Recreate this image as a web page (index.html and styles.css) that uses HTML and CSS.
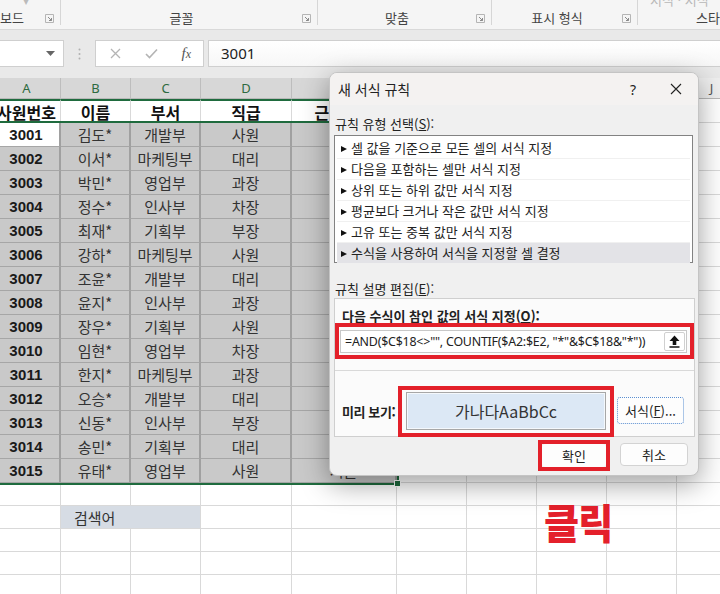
FILE: index.html
```html
<!DOCTYPE html>
<html lang="ko">
<head>
  <meta charset="UTF-8" />
  <title>새 서식 규칙</title>
  <link rel="stylesheet" href="styles.css">
</head>
<body>

  <div class="ribbon">
    <div class="group g1">
      <div class="gtop"><span class="caret">▾</span></div>
      <div class="glabel"><span class="gname left">보드</span><span class="launch"><svg width="9" height="9" viewBox="0 0 9 9"><path d="M0.5 0.5h8v8h-8z" stroke="#b5b5b5" fill="none"/><path d="M3 3l3.5 3.5M6.5 4v2.5H4" stroke="#8a8a8a" fill="none"/></svg></span></div>
    </div>
    <div class="group g2">
      <div class="gtop"></div>
      <div class="glabel"><span class="gname">글꼴</span><span class="launch"><svg width="9" height="9" viewBox="0 0 9 9"><path d="M0.5 0.5h8v8h-8z" stroke="#b5b5b5" fill="none"/><path d="M3 3l3.5 3.5M6.5 4v2.5H4" stroke="#8a8a8a" fill="none"/></svg></span></div>
    </div>
    <div class="group g3">
      <div class="gtop"></div>
      <div class="glabel"><span class="gname">맞춤</span><span class="launch"><svg width="9" height="9" viewBox="0 0 9 9"><path d="M0.5 0.5h8v8h-8z" stroke="#b5b5b5" fill="none"/><path d="M3 3l3.5 3.5M6.5 4v2.5H4" stroke="#8a8a8a" fill="none"/></svg></span></div>
    </div>
    <div class="group g4">
      <div class="gtop"></div>
      <div class="glabel"><span class="gname">표시 형식</span><span class="launch"><svg width="9" height="9" viewBox="0 0 9 9"><path d="M0.5 0.5h8v8h-8z" stroke="#b5b5b5" fill="none"/><path d="M3 3l3.5 3.5M6.5 4v2.5H4" stroke="#8a8a8a" fill="none"/></svg></span></div>
    </div>
    <div class="group g5">
      <div class="gtop"><span class="faint">서식 · 서식</span></div>
      <div class="glabel"><span class="gname">스타일</span><span class="launch"></span></div>
    </div>
  </div>

  <div class="band"></div>

  <div class="fbar">
    <div class="namebox">
      <svg width="9" height="5" viewBox="0 0 9 5"><path d="M0 0h9L4.5 5z" fill="#666"/></svg>
    </div>
    <div class="fdots">
      <svg width="3" height="12" viewBox="0 0 3 12"><circle cx="1.5" cy="1.5" r="1" fill="#b0b0b0"/><circle cx="1.5" cy="6" r="1" fill="#b0b0b0"/><circle cx="1.5" cy="10.5" r="1" fill="#b0b0b0"/></svg>
    </div>
    <div class="fbtns">
      <svg width="11" height="11" viewBox="0 0 11 11"><path d="M1 1l9 9M10 1l-9 9" stroke="#b4b4b4" stroke-width="1.3"/></svg>
      <svg width="13" height="11" viewBox="0 0 13 11"><path d="M1 6l3.5 3.5L12 1.5" stroke="#b4b4b4" stroke-width="1.6" fill="none"/></svg>
      <span class="fx"><i>f</i><i class="fxx">x</i></span>
    </div>
    <div class="finput">3001</div>
  </div>

  <div class="band2"></div>

  <div class="sheet">
    <div class="row colhead">
      <div class="c h hs">A</div><div class="c h hs">B</div><div class="c h hs">C</div><div class="c h hs">D</div><div class="c h hs">E</div>
      <div class="c h">F</div><div class="c h">G</div><div class="c h">H</div><div class="c h">I</div><div class="c h">J</div>
    </div>
    <div class="row r1">
      <div class="c t">사원번호</div><div class="c t">이름</div><div class="c t">부서</div><div class="c t">직급</div><div class="c t">근속연수</div>
      <div class="c"></div><div class="c"></div><div class="c"></div><div class="c"></div><div class="c"></div>
    </div>
    <div class="row"><div class="c s a act">3001</div><div class="c s">김도*</div><div class="c s">개발부</div><div class="c s">사원</div><div class="c s">서울</div><div class="c"></div><div class="c"></div><div class="c"></div><div class="c"></div><div class="c"></div></div>
    <div class="row"><div class="c s a">3002</div><div class="c s">이서*</div><div class="c s">마케팅부</div><div class="c s">대리</div><div class="c s">서울</div><div class="c"></div><div class="c"></div><div class="c"></div><div class="c"></div><div class="c"></div></div>
    <div class="row"><div class="c s a">3003</div><div class="c s">박민*</div><div class="c s">영업부</div><div class="c s">과장</div><div class="c s">부산</div><div class="c"></div><div class="c"></div><div class="c"></div><div class="c"></div><div class="c"></div></div>
    <div class="row"><div class="c s a">3004</div><div class="c s">정수*</div><div class="c s">인사부</div><div class="c s">차장</div><div class="c s">대구</div><div class="c"></div><div class="c"></div><div class="c"></div><div class="c"></div><div class="c"></div></div>
    <div class="row"><div class="c s a">3005</div><div class="c s">최재*</div><div class="c s">기획부</div><div class="c s">부장</div><div class="c s">서울</div><div class="c"></div><div class="c"></div><div class="c"></div><div class="c"></div><div class="c"></div></div>
    <div class="row"><div class="c s a">3006</div><div class="c s">강하*</div><div class="c s">마케팅부</div><div class="c s">사원</div><div class="c s">인천</div><div class="c"></div><div class="c"></div><div class="c"></div><div class="c"></div><div class="c"></div></div>
    <div class="row"><div class="c s a">3007</div><div class="c s">조윤*</div><div class="c s">개발부</div><div class="c s">대리</div><div class="c s">서울</div><div class="c"></div><div class="c"></div><div class="c"></div><div class="c"></div><div class="c"></div></div>
    <div class="row"><div class="c s a">3008</div><div class="c s">윤지*</div><div class="c s">인사부</div><div class="c s">과장</div><div class="c s">광주</div><div class="c"></div><div class="c"></div><div class="c"></div><div class="c"></div><div class="c"></div></div>
    <div class="row"><div class="c s a">3009</div><div class="c s">장우*</div><div class="c s">기획부</div><div class="c s">사원</div><div class="c s">대전</div><div class="c"></div><div class="c"></div><div class="c"></div><div class="c"></div><div class="c"></div></div>
    <div class="row"><div class="c s a">3010</div><div class="c s">임현*</div><div class="c s">영업부</div><div class="c s">차장</div><div class="c s">서울</div><div class="c"></div><div class="c"></div><div class="c"></div><div class="c"></div><div class="c"></div></div>
    <div class="row"><div class="c s a">3011</div><div class="c s">한지*</div><div class="c s">마케팅부</div><div class="c s">과장</div><div class="c s">부산</div><div class="c"></div><div class="c"></div><div class="c"></div><div class="c"></div><div class="c"></div></div>
    <div class="row"><div class="c s a">3012</div><div class="c s">오승*</div><div class="c s">개발부</div><div class="c s">대리</div><div class="c s">울산</div><div class="c"></div><div class="c"></div><div class="c"></div><div class="c"></div><div class="c"></div></div>
    <div class="row"><div class="c s a">3013</div><div class="c s">신동*</div><div class="c s">인사부</div><div class="c s">부장</div><div class="c s">서울</div><div class="c"></div><div class="c"></div><div class="c"></div><div class="c"></div><div class="c"></div></div>
    <div class="row"><div class="c s a">3014</div><div class="c s">송민*</div><div class="c s">기획부</div><div class="c s">대리</div><div class="c s">수원</div><div class="c"></div><div class="c"></div><div class="c"></div><div class="c"></div><div class="c"></div></div>
    <div class="row"><div class="c s a">3015</div><div class="c s">유태*</div><div class="c s">영업부</div><div class="c s">사원</div><div class="c s">서울</div><div class="c"></div><div class="c"></div><div class="c"></div><div class="c"></div><div class="c"></div></div>
    <div class="row low"><div class="c"></div><div class="c"></div><div class="c"></div><div class="c"></div><div class="c"></div><div class="c"></div><div class="c"></div><div class="c"></div><div class="c"></div><div class="c"></div></div>
    <div class="row low"><div class="c"></div><div class="c search">검색어</div><div class="c"></div><div class="c"></div><div class="c"></div><div class="c"></div><div class="c"></div><div class="c"></div><div class="c"></div></div>
    <div class="row low"><div class="c"></div><div class="c"></div><div class="c"></div><div class="c"></div><div class="c"></div><div class="c"></div><div class="c"></div><div class="c"></div><div class="c"></div><div class="c"></div></div>
    <div class="row low"><div class="c"></div><div class="c"></div><div class="c"></div><div class="c"></div><div class="c"></div><div class="c"></div><div class="c"></div><div class="c"></div><div class="c"></div><div class="c"></div></div>
    <div class="row low"><div class="c"></div><div class="c"></div><div class="c"></div><div class="c"></div><div class="c"></div><div class="c"></div><div class="c"></div><div class="c"></div><div class="c"></div><div class="c"></div></div>
  </div>

  <!-- 선택 영역 테두리 -->
  <div class="selection"></div>
  <div class="fill-handle"></div>

  <div class="note">클릭</div>

  <div class="dialog">
    <div class="dlg-title">
      <span class="dlg-name">새 서식 규칙</span>
      <span class="dlg-help">?</span>
      <span class="dlg-close"><svg width="12" height="12" viewBox="0 0 12 12"><path d="M1 1l10 10M11 1L1 11" stroke="#222" stroke-width="1.1"/></svg></span>
    </div>
    <div class="dlg-body">
      <div class="dlg-label">규칙 유형 선택(<u>S</u>):</div>
      <div class="rule-list">
        <div class="rule">셀 값을 기준으로 모든 셀의 서식 지정</div>
        <div class="rule">다음을 포함하는 셀만 서식 지정</div>
        <div class="rule">상위 또는 하위 값만 서식 지정</div>
        <div class="rule">평균보다 크거나 작은 값만 서식 지정</div>
        <div class="rule">고유 또는 중복 값만 서식 지정</div>
        <div class="rule active">수식을 사용하여 서식을 지정할 셀 결정</div>
      </div>
      <div class="dlg-label second">규칙 설명 편집(<u>E</u>):</div>
      <div class="edit-box">
        <div class="edit-top">
          <div class="bold-label">다음 수식이 참인 값의 서식 지정(<u>O</u>):</div>
          <div class="mark formula-mark">
            <div class="formula">
              <span class="formula-text">=AND($C$18&lt;&gt;"", COUNTIF($A2:$E2, "*"&amp;$C$18&amp;"*"))</span>
              <span class="collapse"><svg width="11" height="13" viewBox="0 0 11 13"><path d="M5.5 0.5L10.5 6H7.3v4H3.7V6H0.5z" fill="#111"/><path d="M0.5 12h10" stroke="#111" stroke-width="1.6"/></svg></span>
            </div>
          </div>
        </div>
        <div class="edit-bottom">
          <div class="bold-label preview-label">미리 보기:</div>
          <div class="mark preview-mark">
            <div class="preview">가나다AaBbCc</div>
          </div>
          <button class="btn format-btn">서식(<u>F</u>)...</button>
        </div>
      </div>
      <div class="dlg-foot">
        <div class="mark ok-mark"><button class="btn ok-btn">확인</button></div>
        <button class="btn cancel-btn">취소</button>
      </div>
    </div>
  </div>

</body>
</html>
```

FILE: styles.css
```css
* {
  box-sizing: border-box;
}

body {
  margin: 0;
  width: 720px;
  height: 594px;
  overflow: hidden;
  position: relative;
  background: #fff;
  font-family: "Noto Sans CJK KR", "Noto Sans", sans-serif;
  color: #333;
}

/* 리본 */
.ribbon {
  height: 30px;
  display: flex;
  background: #f5f5f5;
  border-bottom: 1px solid #d9d9d9;
  overflow: hidden;
}

.group {
  flex: 0 0 auto;
  height: 25px;
  display: flex;
  flex-direction: column;
  border-right: 1px solid #d6d6d6;
}

.g1 { width: 61px; }
.g2 { width: 257px; }
.g3 { width: 174px; }
.g4 { width: 146px; }
.g5 { width: 167px; border-right: none; }

.gtop {
  height: 11px;
  position: relative;
  overflow: hidden;
}

.caret {
  position: absolute;
  left: 23px;
  top: -9px;
  font-size: 12px;
  color: #bbb;
}

.faint {
  position: absolute;
  left: 12px;
  top: -10px;
  font-size: 13px;
  color: #b8b8b8;
}

.glabel {
  flex: 1;
  display: flex;
  align-items: center;
  font-size: 13px;
  color: #444;
}

.gname {
  flex: 1;
  text-align: center;
  line-height: 14px;
}

.gname.left {
  text-align: left;
}

.launch {
  width: 15px;
  display: flex;
  align-items: center;
}

.band {
  height: 10px;
  background: #e9e9e9;
}

/* 수식 입력줄 */
.fbar {
  height: 27px;
  display: flex;
  background: #e9e9e9;
}

.namebox {
  width: 64px;
  background: #fff;
  border: 1px solid #cfcfcf;
  border-left: none;
  display: flex;
  align-items: center;
  justify-content: flex-end;
  padding-right: 8px;
}

.fdots {
  width: 31px;
  display: flex;
  align-items: center;
  justify-content: center;
}

.fbtns {
  width: 109px;
  background: #fff;
  border: 1px solid #cfcfcf;
  display: flex;
  align-items: center;
  justify-content: space-between;
  padding: 0 12px 0 14px;
}

.fx {
  font-family: "Liberation Serif", serif;
  font-size: 15px;
  color: #555;
}

.fxx {
  font-size: 12px;
}

.finput {
  flex: 1;
  margin-left: 4px;
  background: linear-gradient(#fff, #f7f7f7);
  border: 1px solid #cfcfcf;
  border-right: none;
  font-family: "Noto Sans", sans-serif;
  font-size: 15px;
  color: #222;
  padding-left: 12px;
  line-height: 24px;
}

.band2 {
  height: 11px;
  background: #e9e9e9;
}

/* 시트 */
.sheet {
  margin-left: -7px;
}

.row {
  display: grid;
  grid-template-columns: 68px 70px 70px 91px 105px 70px 70px 70px 70px 70px;
  height: 24px;
}

.row.low {
  height: 23px;
}

.c {
  border-right: 1px solid #d9d9d9;
  border-bottom: 1px solid #d9d9d9;
  display: flex;
  align-items: center;
  justify-content: center;
  font-size: 15px;
  color: #333;
  white-space: nowrap;
  overflow: hidden;
}

.colhead {
  height: 21px;
  background: #efefef;
}

.c.h {
  font-family: "Noto Sans", sans-serif;
  font-size: 13px;
  color: #555;
  border-right-color: #cdcdcd;
  border-bottom-color: #b8b8b8;
}

.c.hs {
  background: #d7d7d7;
  color: #2d6a40;
  border-right-color: #bdbdbd;
}

.r1 .c.t {
  font-weight: bold;
  font-size: 16px;
  color: #111;
  border-top: 2px solid #1f6b3e;
}

.c.s {
  background: #c9c9c9;
  border-right: 2px solid #a0a0a0;
  border-bottom: 1px solid #a6a6a6;
}

.c.a {
  font-family: "Liberation Sans", Arial, sans-serif;
  font-weight: bold;
  color: #1a1a1a;
}

.c.act {
  background: #fff;
}

.c.search {
  grid-column: span 2;
  background: #d6dce4;
  justify-content: flex-start;
  padding-left: 13px;
}

.selection {
  position: absolute;
  left: -6px;
  top: 121px;
  width: 405px;
  height: 364px;
  border: 2px solid #1f6b3e;
  pointer-events: none;
}

.fill-handle {
  position: absolute;
  left: 394px;
  top: 480px;
  width: 7px;
  height: 7px;
  background: #1f6b3e;
  border: 1px solid #fff;
}

.note {
  position: absolute;
  left: 544px;
  top: 495px;
  font-size: 41px;
  font-weight: 900;
  color: #e4202b;
  letter-spacing: -1px;
  transform: scaleX(0.93);
  transform-origin: left top;
  line-height: 52px;
}

/* 대화상자 */
.dialog {
  position: absolute;
  left: 329px;
  top: 72px;
  width: 370px;
  height: 404px;
  background: #f0f0f0;
  border: 1px solid #c4c4c4;
  border-radius: 8px;
  box-shadow: 0 8px 28px rgba(0, 0, 0, 0.38);
  overflow: hidden;
  z-index: 5;
  font-size: 13px;
  color: #222;
}

.dlg-title {
  height: 32px;
  background: #f4f2f1;
  display: flex;
  align-items: center;
  padding-left: 8px;
}

.dlg-name {
  flex: 1;
  font-size: 14px;
}

.dlg-help {
  width: 40px;
  font-family: "Noto Sans", sans-serif;
  font-size: 14px;
}

.dlg-close {
  width: 28px;
  display: flex;
}

.dlg-body {
  padding: 0 4px 0 4px;
}

.dlg-label {
  margin-top: 10px;
  margin-bottom: 2px;
  line-height: 18px;
  padding-left: 1px;
}

.dlg-label.second {
  margin-top: 17px;
  margin-bottom: 0;
}

.rule-list {
  height: 128px;
  width: 359px;
  background: #fff;
  border: 1px solid #828282;
  padding: 2px 2px 0 2px;
}

.rule {
  height: 21px;
  line-height: 20px;
  border-bottom: 1px solid #f0f0f0;
  padding-left: 4px;
}

.rule::before {
  content: "";
  display: inline-block;
  border-left: 6px solid #111;
  border-top: 3.5px solid transparent;
  border-bottom: 3.5px solid transparent;
  margin-right: 4px;
  vertical-align: 1px;
}

.rule.active {
  background: #e3e3e7;
}

.edit-box {
  width: 361px;
  height: 139px;
  background: #fbfbfb;
  border: 1px solid #cfcfcf;
}

.edit-top {
  height: 72px;
  border-bottom: 1px solid #d9d9d9;
  padding-top: 8px;
}

.bold-label {
  font-weight: bold;
  line-height: 18px;
  padding-left: 7px;
}

.mark {
  border: 4px solid #e3202a;
}

.formula-mark {
  height: 36px;
  margin-top: -2px;
  padding: 3px 3px 2px 1px;
}

.formula {
  height: 23px;
  background: #fff;
  border: 1px solid #c8c8c8;
  display: flex;
  align-items: center;
  padding-left: 4px;
}

.formula-text {
  flex: 1;
  font-family: "Noto Sans", sans-serif;
  font-size: 12.4px;
  letter-spacing: -0.2px;
  color: #222;
}

.collapse {
  width: 21px;
  height: 19px;
  margin-right: 1px;
  border: 1px solid #d0d0d0;
  border-radius: 2px;
  display: flex;
  align-items: center;
  justify-content: center;
}

.edit-bottom {
  height: 64px;
  display: flex;
  align-items: flex-start;
  padding-top: 15px;
}

.preview-label {
  flex: 0 0 63px;
  margin-top: 17px;
  padding-left: 7px;
  white-space: nowrap;
  letter-spacing: -0.4px;
}

.preview-mark {
  width: 216px;
  height: 51px;
  padding: 2px 4px 3px 4px;
}

.preview {
  height: 100%;
  background: #dce8f5;
  border: 1px solid #a7a7a7;
  box-shadow: inset 0 0 0 1px #f4f8fc;
  display: flex;
  align-items: center;
  justify-content: center;
  font-size: 16px;
  color: #333;
}

.btn {
  font-family: "Noto Sans CJK KR", "Noto Sans", sans-serif;
  font-size: 13px;
  color: #222;
  background: #fdfdfd;
  border: 1px solid #d3d3d3;
  border-radius: 4px;
  padding: 0;
}

.format-btn {
  margin-top: 11px;
  margin-left: 3px;
  width: 67px;
  height: 27px;
  border: 1px dotted #5b8fd1;
  border-radius: 3px;
}

.dlg-foot {
  display: flex;
  justify-content: flex-end;
  align-items: flex-start;
  gap: 10px;
  padding-right: 6px;
  margin-top: 3px;
}

.ok-mark {
  width: 72px;
  height: 31px;
}

.ok-btn {
  width: 100%;
  height: 100%;
  border: none;
}

.cancel-btn {
  margin-top: 3px;
  width: 68px;
  height: 23px;
}
```
